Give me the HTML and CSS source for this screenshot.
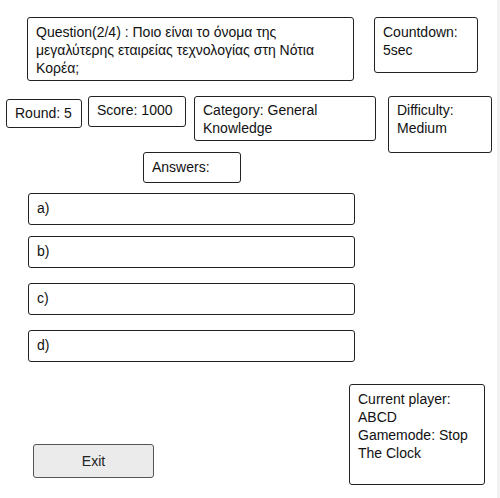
FILE: index.html
```html
<!DOCTYPE html>
<html lang="el">
<head>
<meta charset="utf-8">
<title>Quiz</title>
<link rel="stylesheet" href="styles.css">
</head>
<body>
<div class="page">
  <main class="game">
    <div class="row row-top">
      <div class="box question">Question(2/4) : Ποιο είναι το όνομα της μεγαλύτερης εταιρείας τεχνολογίας στη Νότια Κορέα;</div>
      <div class="box countdown">Countdown: 5sec</div>
    </div>
    <div class="row row-info">
      <div class="box round">Round: 5</div>
      <div class="box score">Score: 1000</div>
      <div class="box category">Category: General Knowledge</div>
      <div class="box difficulty">Difficulty: Medium</div>
    </div>
    <div class="box answers-label">Answers:</div>
    <div class="answers">
      <div class="box answer answer-a">a)</div>
      <div class="box answer answer-b">b)</div>
      <div class="box answer answer-c">c)</div>
      <div class="box answer answer-d">d)</div>
    </div>
    <div class="row row-bottom">
      <button class="exit">Exit</button>
      <div class="box player">Current player: ABCD<br>Gamemode: Stop The Clock</div>
    </div>
  </main>
  <div class="scroll-track"></div>
</div>
</body>
</html>
```
FILE: styles.css
```css
html, body {
  margin: 0;
  padding: 0;
  background: #fff;
}
body {
  font-family: "Liberation Sans", Arial, sans-serif;
  font-size: 14px;
  line-height: 18px;
  color: #111;
}
.page {
  display: flex;
  width: 500px;
  height: 498px;
  overflow: hidden;
}
.game {
  width: 497px;
  flex: none;
}
.scroll-track {
  flex: 1;
  background: #f1f1f1;
}
.row {
  display: flex;
  align-items: flex-start;
}
.box {
  box-sizing: border-box;
  border: 1px solid #222;
  border-radius: 3px;
  padding: 4px 7px 0 8px;
}
.row-top {
  padding-top: 17px;
}
.question {
  margin-left: 27px;
  width: 327px;
  height: 64px;
  padding-top: 5px;
}
.countdown {
  margin-left: 20px;
  width: 104px;
  height: 56px;
  padding-top: 5px;
}
.row-info {
  margin-top: 15px;
  height: 56px;
}
.round {
  margin-left: 6px;
  margin-top: 3px;
  width: 76px;
  height: 29px;
  padding-top: 4px;
}
.score {
  margin-left: 6px;
  width: 98px;
  height: 31px;
  padding-top: 4px;
}
.category {
  margin-left: 8px;
  width: 182px;
  height: 45px;
}
.difficulty {
  margin-left: 12px;
  width: 104px;
  height: 57px;
}
.answers-label {
  margin-left: 143px;
  width: 98px;
  height: 31px;
  padding-top: 5px;
}
.answers {
  display: flex;
  flex-direction: column;
  margin-top: 10px;
  margin-left: 28px;
}
.answer {
  width: 327px;
  height: 32px;
  padding-top: 5px;
}
.answer-b {
  margin-top: 11px;
}
.answer-c {
  margin-top: 15px;
}
.answer-d {
  margin-top: 15px;
}
.row-bottom {
  margin-top: 22px;
  align-items: flex-end;
}
.exit {
  box-sizing: border-box;
  margin: 0 0 7px 33px;
  width: 121px;
  height: 34px;
  border: 1px solid #555;
  border-radius: 3px;
  background: #ebebeb;
  font-family: "Liberation Sans", Arial, sans-serif;
  font-size: 14px;
  color: #222;
  padding: 0;
}
.player {
  margin-left: 195px;
  width: 136px;
  height: 101px;
  padding-top: 5px;
}
```
